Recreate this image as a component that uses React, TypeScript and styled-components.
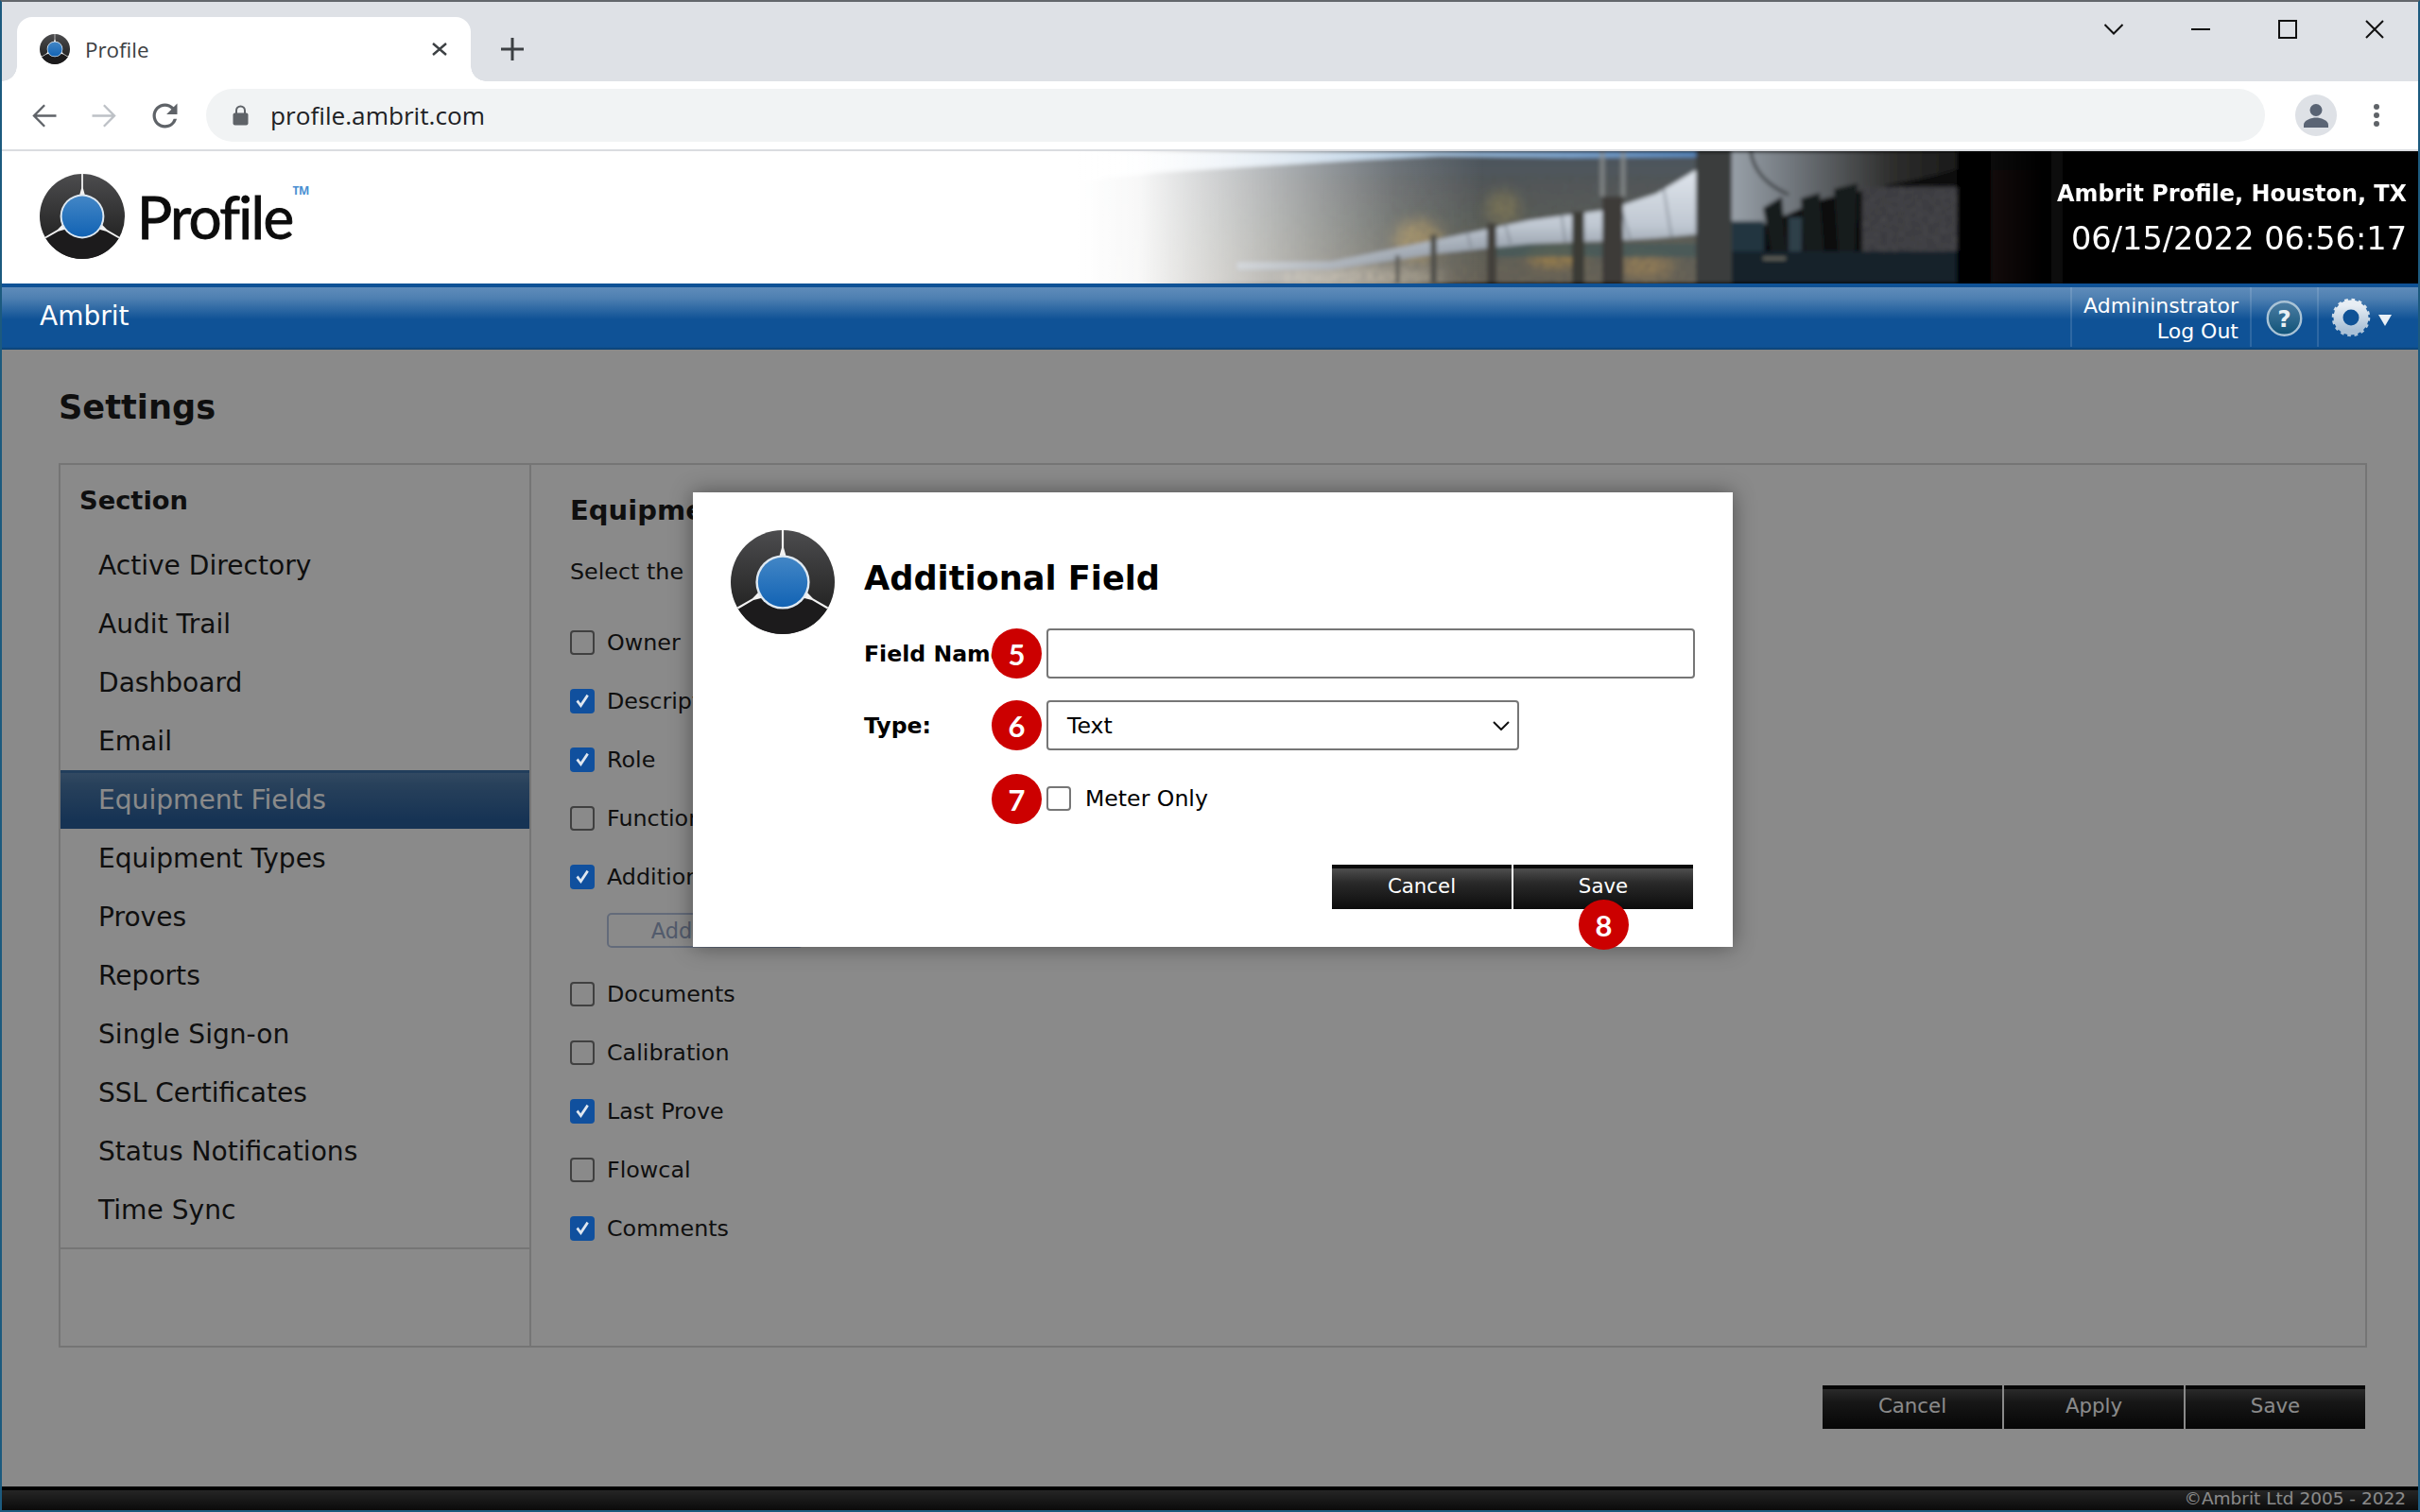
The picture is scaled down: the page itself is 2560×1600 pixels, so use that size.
import React from "react";
import styled, { createGlobalStyle } from "styled-components";

const sans = `"DejaVu Sans", Verdana, sans-serif`;
const ui = `"Open Sans", "Noto Sans", sans-serif`;

const Global = createGlobalStyle`
  html, body { margin: 0; padding: 0; background: #fff; }
  body { width: 2560px; height: 1600px; overflow: hidden; font-family: ${sans}; }
  * { box-sizing: border-box; }
`;

const Frame = styled.div`
  position: relative;
  width: 2560px;
  height: 1600px;
  display: flex;
  flex-direction: column;
  border: 2px solid #1c5a7e;
  border-top-color: #63676c;
`;

/* Browser chrome */
const TabStrip = styled.div`
  flex: 0 0 84px;
  display: flex;
  background: #dee1e6;
`;
const Tab = styled.div`
  position: relative;
  width: 480px;
  height: 68px;
  margin: 16px 0 0 16px;
  padding: 0 24px;
  display: flex;
  align-items: center;
  background: #fff;
  border-radius: 16px 16px 0 0;
  &::before, &::after {
    content: "";
    position: absolute;
    bottom: 0;
    width: 16px;
    height: 16px;
  }
  &::before { left: -16px; background: radial-gradient(circle at 0 0, transparent 15.5px, #fff 16px); }
  &::after { right: -16px; background: radial-gradient(circle at 100% 0, transparent 15.5px, #fff 16px); }
`;
const TabTitle = styled.span`
  flex: 1;
  margin-left: 16px;
  font: 400 22.4px ${ui};
  color: #3c4043;
`;
const NewTab = styled.div`
  width: 44px;
  height: 68px;
  margin: 16px 0 0 22px;
  display: flex;
  align-items: center;
  justify-content: center;
`;
const WindowControls = styled.div`
  margin-left: auto;
  display: flex;
  height: 58px;
`;
const WindowControl = styled.div`
  width: 92px;
  display: flex;
  align-items: center;
  justify-content: center;
`;
const Toolbar = styled.div`
  flex: 0 0 74px;
  display: flex;
  align-items: center;
  padding: 0 12px;
  background: #fff;
  border-bottom: 2px solid #dadce0;
`;
const ToolButton = styled.div`
  width: 64px;
  height: 56px;
  display: flex;
  align-items: center;
  justify-content: center;
`;
const Omnibox = styled.div`
  flex: 1;
  height: 56px;
  margin: 0 22px 0 12px;
  padding-left: 28px;
  display: flex;
  align-items: center;
  gap: 23px;
  background: #f1f3f4;
  border-radius: 28px;
`;
const Url = styled.span`
  font: 400 26.2px ${ui};
  color: #202124;
`;
const Avatar = styled.div`
  width: 44px;
  height: 44px;
  border-radius: 50%;
  background: #dee1e6;
  display: flex;
  align-items: center;
  justify-content: center;
`;

/* App header */
const Header = styled.header`
  position: relative;
  flex: 0 0 140px;
  display: flex;
  align-items: center;
  justify-content: space-between;
  background: #fff;
  padding: 0 12px 0 40px;
`;
const ArtLayer = styled.svg`
  position: absolute;
  top: 0;
  right: 0;
`;
const Brand = styled.div`
  position: relative;
  display: flex;
  align-items: center;
  gap: 13px;
  margin-top: -2px;
`;
const Wordmark = styled.span`
  font: 400 62px Lato, "Open Sans", sans-serif;
  letter-spacing: -1.7px;
  color: #0c0c0c;
  -webkit-text-stroke: 0.9px #0c0c0c;
`;
const Tm = styled.sup`
  font: 700 12px ${ui};
  color: #4a8fd2;
  align-self: flex-start;
  margin: 9px 0 0 -13px;
  letter-spacing: -0.5px;
`;
const Site = styled.div`
  position: relative;
  display: flex;
  flex-direction: column;
  align-items: flex-end;
  gap: 13px;
  color: #fff;
  padding-top: 2px;
`;
const SiteName = styled.div`
  font: 700 23.9px/30px ${sans};
`;
const Clock = styled.div`
  font: 400 33.6px/40px ${sans};
`;
const NavBar = styled.nav`
  flex: 0 0 70px;
  display: flex;
  align-items: stretch;
  color: #fff;
  background: linear-gradient(#0f5296 0 4px, #5f8cba 4px, #4d7fb1 16px, #0f5296 38px, #0f5296 67px, #0b3f6e 70px);
`;
const NavTitle = styled.div`
  flex: 1;
  padding: 0 0 2px 40px;
  display: flex;
  align-items: center;
  font: 400 28px ${sans};
`;
const NavCell = styled.div<{ $w: number }>`
  width: ${(p) => p.$w}px;
  margin: 4px 0 3px;
  display: flex;
  align-items: center;
  border-left: 2px solid rgba(255, 255, 255, 0.13);
`;
const UserBlock = styled(NavCell)`
  flex-direction: column;
  align-items: flex-end;
  justify-content: center;
  padding: 2px 12px 0 0;
  font: 400 22px/27px ${sans};
`;

/* Page */
const PageArea = styled.div`
  position: relative;
  flex: 1;
  min-height: 0;
  display: flex;
  flex-direction: column;
  background: #fff;
`;
const Scrim = styled.div`
  position: absolute;
  inset: 0;
  background: rgba(0, 0, 0, 0.46);
`;
const Main = styled.main`
  flex: 1;
  padding: 39px 54px 0 60px;
  color: #1c1c1c;
`;
const PageTitle = styled.h1`
  margin: 0 0 37px;
  font: 700 35.2px/44px ${sans};
`;
const Panel = styled.section`
  height: 936px;
  display: flex;
  border: 2px solid #d8d8d8;
`;
const Sidebar = styled.aside`
  flex: 0 0 498px;
  border-right: 2px solid #d8d8d8;
`;
const SectionHead = styled.h2`
  margin: 0;
  height: 75px;
  padding: 18px 0 0 20px;
  font: 700 27.3px/40px ${sans};
`;
const SectionList = styled.ul`
  list-style: none;
  margin: 0;
  padding: 0 0 9px;
  border-bottom: 2px solid #d8d8d8;
`;
const SectionItem = styled.li<{ $active?: boolean }>`
  height: 62px;
  padding-left: 40px;
  display: flex;
  align-items: center;
  font: 400 28.1px ${sans};
  color: ${(p) => (p.$active ? "#fff" : "inherit")};
  background: ${(p) =>
    p.$active ? "linear-gradient(#3f74aa 0 3px, #5d88b5 3px, #4a78a8 25%, #2a5f9c 85%)" : "none"};
`;
const Content = styled.div`
  flex: 1;
  padding: 28px 0 0 41px;
`;
const ContentHead = styled.h2`
  margin: 0;
  font: 700 29px/40px ${sans};
`;
const Hint = styled.p`
  margin: 27px 0 26px;
  font: 400 23.8px/36px ${sans};
`;
const CheckRow = styled.label`
  height: 62px;
  display: flex;
  align-items: center;
  gap: 13px;
  font: 400 23.8px ${sans};
`;
const AddRow = styled.div`
  height: 62px;
  padding: 7px 0 0 39px;
`;
const AddButton = styled.button`
  width: 208px;
  height: 37px;
  padding: 0;
  background: #fff;
  border: 2px solid #b8c6e2;
  border-radius: 5px;
  color: #98a8c8;
  font: 400 22.5px ${sans};
`;
const Box = styled.span<{ $checked?: boolean }>`
  position: relative;
  z-index: ${(p) => (p.$checked ? 1 : "auto")};
  flex: 0 0 26px;
  width: 26px;
  height: 26px;
  border-radius: 4px;
  display: flex;
  align-items: center;
  justify-content: center;
  background: ${(p) => (p.$checked ? "#10509e" : "#fff")};
  border: ${(p) => (p.$checked ? "none" : "2px solid #767676")};
`;
const Actions = styled.div`
  margin: 40px 2px 0 0;
  display: flex;
  justify-content: flex-end;
  gap: 2px;
`;
const BlackButton = styled.button`
  position: relative;
  width: 190px;
  height: 46px;
  padding: 0 0 3px;
  border: none;
  color: #fff;
  font: 400 21.3px ${sans};
  background: linear-gradient(#0a0a0a 0 4px, #4e4e4e 4px, #2a2a2a 40%, #0c0c0c 100%);
`;
const Footer = styled.footer`
  flex: 0 0 25px;
  padding-right: 13px;
  display: flex;
  align-items: center;
  justify-content: flex-end;
  color: #fff;
  font: 400 18.5px ${sans};
  background: linear-gradient(#000 0 4px, #464646 4px, #141414 100%);
`;

/* Dialog */
const Modal = styled.div`
  position: absolute;
  left: 731px;
  top: 519px;
  width: 1100px;
  height: 481px;
  padding: 40px 40px 0 40px;
  display: flex;
  gap: 31px;
  background: #fff;
  color: #000;
  box-shadow: 0 0 22px rgba(0, 0, 0, 0.42);
`;
const ModalBody = styled.div`
  flex: 1;
`;
const ModalTitle = styled.h2`
  margin: 0;
  height: 104px;
  padding-bottom: 3px;
  display: flex;
  align-items: center;
  font: 700 35.2px ${sans};
`;
const FieldRow = styled.div<{ $gap: number }>`
  position: relative;
  height: 53px;
  margin-bottom: ${(p) => p.$gap}px;
  display: flex;
  align-items: center;
`;
const FieldLabel = styled.label`
  flex: 0 0 193px;
  font: 700 23.6px ${sans};
`;
const TextBox = styled.input`
  flex: 1;
  height: 53px;
  border: 2px solid #767676;
  border-radius: 4px;
  background: #fff;
  outline: none;
`;
const Select = styled.div`
  width: 500px;
  height: 53px;
  padding: 0 8px 0 20px;
  display: flex;
  align-items: center;
  justify-content: space-between;
  border: 2px solid #767676;
  border-radius: 4px;
  font: 400 23.6px ${sans};
`;
const MeterCheck = styled.label`
  margin: -2px 0 0 193px;
  display: flex;
  align-items: center;
  gap: 15px;
  font: 400 23.6px ${sans};
`;
const ModalActions = styled.div`
  margin: 43px 2px 0 0;
  display: flex;
  justify-content: flex-end;
  gap: 2px;
`;
const ModalButton = styled(BlackButton)`
  height: 47px;
`;
const Callout = styled.span`
  position: absolute;
  width: 53px;
  height: 53px;
  border-radius: 50%;
  background: #cc0000;
  color: #fff;
  display: flex;
  align-items: center;
  justify-content: center;
  font: 700 31px Lato, sans-serif;
`;
const FieldCallout = styled(Callout)`
  left: 135px;
  top: 0;
`;
const SaveCallout = styled(Callout)`
  left: 69px;
  top: 37px;
`;

const Logo = ({ size, id }: { size: number; id: string }) => (
  <svg width={size} height={size} viewBox="-50 -50 100 100">
    <defs>
      <linearGradient id={`${id}d`} x1="0" y1="0" x2="0" y2="1">
        <stop offset="0" stopColor="#4c4c4e" />
        <stop offset="0.7" stopColor="#272727" />
      </linearGradient>
      <linearGradient id={`${id}b`} x1="0" y1="0" x2="0" y2="1">
        <stop offset="0" stopColor="#4286c6" />
        <stop offset="1" stopColor="#1263b4" />
      </linearGradient>
    </defs>
    <circle r="50" fill={`url(#${id}d)`} />
    <path d="M-43.3 25A50 50 0 0 0 43.3 25L0 0Z" fill="#1c1b1c" />
    {[0, 120, 240].map((a) => (
      <g key={a} transform={`rotate(${a})`}>
        <path d="M-1 -50H1V-33L3.500 -24H-3.500L-1 -33Z" fill="#f2f2f2" />
      </g>
    ))}
    <circle r="26" fill="#dfe9f2" />
    <circle r="23.800" fill={`url(#${id}b)`} />
  </svg>
);

const BannerArt = () => (
  <ArtLayer width="1418" height="140" viewBox="0 0 1418 140">
    <defs>
      <linearGradient id="fade" gradientUnits="userSpaceOnUse" x1="0" y1="0" x2="430" y2="0">
        <stop offset="0" stopColor="#fff" />
        <stop offset="0.15" stopColor="#fff" stopOpacity="0.96" />
        <stop offset="0.4" stopColor="#fff" stopOpacity="0.66" />
        <stop offset="0.78" stopColor="#fff" stopOpacity="0.18" />
        <stop offset="1" stopColor="#fff" stopOpacity="0" />
      </linearGradient>
      <linearGradient id="rfade" gradientUnits="userSpaceOnUse" x1="960" y1="0" x2="1022" y2="0">
        <stop offset="0" stopColor="#000" stopOpacity="0" />
        <stop offset="1" stopColor="#000" />
      </linearGradient>
      <linearGradient id="sky" x1="0" y1="0" x2="1" y2="0">
        <stop offset="0" stopColor="#eef3f7" />
        <stop offset="0.5" stopColor="#a6c2dc" />
        <stop offset="1" stopColor="#4d7fb8" />
      </linearGradient>
      <linearGradient id="hill" x1="0" y1="0" x2="0" y2="1">
        <stop offset="0" stopColor="#4c545c" />
        <stop offset="0.6" stopColor="#5e615a" />
        <stop offset="1" stopColor="#6c6658" />
      </linearGradient>
      <linearGradient id="thin" x1="0" y1="0" x2="0" y2="1">
        <stop offset="0" stopColor="#dfe5ec" />
        <stop offset="0.55" stopColor="#c0c8d2" />
        <stop offset="1" stopColor="#7a8490" />
      </linearGradient>
      <linearGradient id="big" gradientUnits="userSpaceOnUse" x1="692" y1="0" x2="1000" y2="0">
        <stop offset="0" stopColor="#98a0a8" />
        <stop offset="0.2" stopColor="#72787e" />
        <stop offset="0.55" stopColor="#2e2e2d" />
        <stop offset="1" stopColor="#050505" />
      </linearGradient>
      <filter id="soft" x="-5%" y="-5%" width="110%" height="110%">
        <feGaussianBlur stdDeviation="2" />
      </filter>
      <filter id="haze" x="-30%" y="-30%" width="160%" height="160%">
        <feGaussianBlur stdDeviation="7" />
      </filter>
      <filter id="grain" x="0" y="0" width="100%" height="100%">
        <feTurbulence type="fractalNoise" baseFrequency="0.16 0.3" numOctaves="2" seed="4" />
        <feColorMatrix values="0 0 0 0 0.08  0 0 0 0 0.08  0 0 0 0 0.08  1.6 0 0 0 -0.5" />
      </filter>
      <clipPath id="band"><rect width="1418" height="140" /></clipPath>
    </defs>
    <g clipPath="url(#band)">
      <rect width="1418" height="140" fill="#000" />
      <g filter="url(#soft)">
        <rect width="700" height="30" fill="url(#sky)" />
        <path d="M0 32L83 22L200 15L300 9L383 5L520 7L700 6V140H0Z" fill="url(#hill)" />
        <g filter="url(#haze)">
          <ellipse cx="360" cy="95" rx="26" ry="22" fill="#a58c56" opacity="0.85" />
          <ellipse cx="450" cy="60" rx="18" ry="18" fill="#8a8058" opacity="0.7" />
          <ellipse cx="505" cy="112" rx="30" ry="10" fill="#b08c4a" opacity="0.9" />
          <ellipse cx="600" cy="122" rx="30" ry="12" fill="#a88a58" opacity="0.8" />
          <ellipse cx="300" cy="134" rx="90" ry="10" fill="#a89e88" />
        </g>
        <rect x="20" y="25" width="640" height="115" filter="url(#grain)" opacity="0.6" />
        <rect x="440" y="98" width="214" height="14" fill="#43585a" opacity="0.7" />
        <path d="M169 118L268 117L383 93L478 73L561 62L612 45L654 20V88L612 92L561 95L478 98L383 108L268 125L169 125Z" fill="url(#thin)" />
        <path d="M412 85L416 102M452 76L458 98M512 68L516 97M574 56L584 92M620 40L628 90" stroke="#727a84" strokeWidth="2" opacity="0.7" />
        <path d="M555 0V48M577 0V48" stroke="#8d9090" strokeWidth="5" opacity="0.75" />
        <rect x="336" y="110" width="5" height="30" fill="#3e3c38" />
        <rect x="373" y="88" width="7" height="52" fill="#3e3c38" />
        <rect x="433" y="76" width="10" height="64" fill="#42403b" />
        <rect x="523" y="64" width="13" height="76" fill="#3b3a36" />
        <rect x="555" y="48" width="22" height="92" fill="#3c3b37" />
        <rect x="692" y="0" width="350" height="140" fill="#0b0e10" />
        <path d="M692 0H1000L905 26L790 50L692 92Z" fill="url(#big)" />
        <path d="M712 0Q716 30 752 46" stroke="#34373a" strokeWidth="3" fill="none" />
        <rect x="830" y="38" width="100" height="70" fill="#38383e" />
        <rect x="830" y="38" width="100" height="70" filter="url(#grain)" />
        <path d="M725 60L745 48L750 112H735ZM765 50L785 44L790 112H770ZM800 40L825 34L822 112H805Z" fill="#191a1c" />
        <rect x="692" y="74" width="34" height="32" fill="#243640" />
        <rect x="752" y="70" width="14" height="36" fill="#2d4048" />
        <rect x="692" y="106" width="300" height="34" fill="#13242a" />
        <rect x="725" y="112" width="24" height="3" fill="#6a6a60" />
        <rect x="654" y="0" width="38" height="140" fill="#3b3d3c" />
        <rect x="930" y="0" width="36" height="140" fill="#040506" />
        <rect x="966" y="20" width="56" height="120" fill="#120e0b" />
      </g>
      <rect width="430" height="140" fill="url(#fade)" />
      <rect x="960" width="70" height="140" fill="url(#rfade)" />
    </g>
  </ArtLayer>
);

const Check = () => (
  <svg width="20" height="20" viewBox="0 0 20 20">
    <path d="M3.5 10.5L5.6 8.6L8.2 12.2L14.6 2.8L16.8 4.4L8.5 17Z" fill="#dfe7f0" />
  </svg>
);

const sections = [
  "Active Directory", "Audit Trail", "Dashboard", "Email", "Equipment Fields", "Equipment Types",
  "Proves", "Reports", "Single Sign-on", "SSL Certificates", "Status Notifications", "Time Sync",
];
const firstFields: [string, boolean][] = [
  ["Owner", false], ["Description", true], ["Role", true], ["Function", false], ["Additional Fields", true],
];
const lastFields: [string, boolean][] = [
  ["Documents", false], ["Calibration", false], ["Last Prove", true], ["Flowcal", false], ["Comments", true],
];

const Field = ({ name, on }: { name: string; on: boolean }) => (
  <CheckRow>
    <Box $checked={on}>{on && <Check />}</Box>
    {name}
  </CheckRow>
);

export default function App() {
  return (
    <Frame>
      <Global />
      <TabStrip>
        <Tab>
          <Logo size={32} id="fav" />
          <TabTitle>Profile</TabTitle>
          <svg width="18" height="18" viewBox="0 0 18 18">
            <path d="M2 3L16 15M16 3L2 15" stroke="#3c4043" strokeWidth="2.4" />
          </svg>
        </Tab>
        <NewTab>
          <svg width="24" height="24" viewBox="0 0 24 24">
            <path d="M12 0V24M0 12H24" stroke="#3c4043" strokeWidth="3" />
          </svg>
        </NewTab>
        <WindowControls>
          <WindowControl>
            <svg width="22" height="12" viewBox="0 0 22 12">
              <path d="M1.5 1L11 10.5L20.5 1" stroke="#111" strokeWidth="2" fill="none" />
            </svg>
          </WindowControl>
          <WindowControl>
            <svg width="20" height="20" viewBox="0 0 20 20"><path d="M0 10H20" stroke="#111" strokeWidth="2" /></svg>
          </WindowControl>
          <WindowControl>
            <svg width="20" height="20" viewBox="0 0 20 20"><rect x="1" y="1" width="18" height="18" stroke="#111" strokeWidth="2" fill="none" /></svg>
          </WindowControl>
          <WindowControl>
            <svg width="20" height="20" viewBox="0 0 20 20"><path d="M1 1L19 19M19 1L1 19" stroke="#111" strokeWidth="2" /></svg>
          </WindowControl>
        </WindowControls>
      </TabStrip>
      <Toolbar>
        <ToolButton>
          <svg width="39" height="39" viewBox="0 0 24 24" fill="#5f6368"><path d="M20 11.2H7.3l5.6-5.6L11.9 4.600l-7.400 7.400 7.400 7.400 1-1-5.600-5.600H20z" /></svg>
        </ToolButton>
        <ToolButton>
          <svg width="39" height="39" viewBox="0 0 24 24" fill="#bdc1c6"><path d="M4 11.2h12.700l-5.600-5.600 1-1 7.400 7.400-7.400 7.400-1-1 5.600-5.600H4z" /></svg>
        </ToolButton>
        <ToolButton>
          <svg width="39" height="39" viewBox="0 0 24 24" fill="#5f6368"><path d="M17.65 6.35A7.958 7.958 0 0 0 12 4c-4.420 0-7.990 3.580-7.990 8s3.570 8 7.990 8c3.730 0 6.840-2.550 7.730-6h-2.080A5.990 5.990 0 0 1 12 18c-3.310 0-6-2.690-6-6s2.690-6 6-6c1.660 0 3.140.69 4.220 1.780L13 11h7V4l-2.350 2.350z" /></svg>
        </ToolButton>
        <Omnibox>
          <svg width="17" height="22" viewBox="0 0 17 22">
            <path d="M4 9V6a4.500 4.500 0 0 1 9 0v3" stroke="#5f6368" strokeWidth="2" fill="none" />
            <rect x="0.5" y="8.500" width="16" height="13" rx="2" fill="#5f6368" />
          </svg>
          <Url>profile.ambrit.com</Url>
        </Omnibox>
        <ToolButton>
          <Avatar>
            <svg width="28" height="26" viewBox="0 0 28 26" fill="#5a6474">
              <circle cx="14" cy="7.500" r="6.500" />
              <path d="M1 26v-3c0-5 8.500-7.500 13-7.500S27 18 27 23v3z" />
            </svg>
          </Avatar>
        </ToolButton>
        <ToolButton>
          <svg width="8" height="26" viewBox="0 0 8 26" fill="#5f6368">
            <circle cx="4" cy="4" r="3" /><circle cx="4" cy="13" r="3" /><circle cx="4" cy="22" r="3" />
          </svg>
        </ToolButton>
      </Toolbar>

      <Header>
        <BannerArt />
        <Brand>
          <Logo size={90} id="hdr" />
          <Wordmark>Profile</Wordmark>
          <Tm>TM</Tm>
        </Brand>
        <Site>
          <SiteName>Ambrit Profile, Houston, TX</SiteName>
          <Clock>06/15/2022 06:56:17</Clock>
        </Site>
      </Header>
      <NavBar>
        <NavTitle>Ambrit</NavTitle>
        <UserBlock $w={190}>
          <span>Admininstrator</span>
          <span>Log Out</span>
        </UserBlock>
        <NavCell $w={71}>
          <svg width="72" height="44" viewBox="0 0 72 44">
            <defs>
              <linearGradient id="help" x1="0" y1="0" x2="0" y2="1">
                <stop offset="0" stopColor="#4d7ea4" />
                <stop offset="1" stopColor="#0f5277" />
              </linearGradient>
            </defs>
            <circle cx="36" cy="23" r="18.500" fill="url(#help)" stroke="#a9c3d6" strokeWidth="2.500" />
            <text x="36" y="32" textAnchor="middle" fill="#e8f0f4" fontFamily="'DejaVu Sans', sans-serif" fontWeight="700" fontSize="26">?</text>
          </svg>
        </NavCell>
        <NavCell $w={107}>
          <svg width="100" height="44" viewBox="0 0 100 44">
            <defs>
              <linearGradient id="gear" x1="0" y1="0" x2="0" y2="1">
                <stop offset="0" stopColor="#e8eef4" />
                <stop offset="1" stopColor="#a9c0d6" />
              </linearGradient>
            </defs>
            <circle cx="34" cy="22" r="18.500" fill="none" stroke="url(#gear)" strokeWidth="3.500" strokeDasharray="3.600 3.660" />
            <circle cx="34" cy="22" r="13" fill="none" stroke="url(#gear)" strokeWidth="11" />
            <circle cx="34" cy="22" r="8.500" fill="#0f5296" />
            <path d="M63 19H77L70 31Z" fill="#e9f0f6" />
          </svg>
        </NavCell>
      </NavBar>

      <PageArea>
        <Main>
          <PageTitle>Settings</PageTitle>
          <Panel>
            <Sidebar>
              <SectionHead>Section</SectionHead>
              <SectionList>
                {sections.map((s) => (
                  <SectionItem key={s} $active={s === "Equipment Fields"}>{s}</SectionItem>
                ))}
              </SectionList>
            </Sidebar>
            <Content>
              <ContentHead>Equipment Fields</ContentHead>
              <Hint>Select the{"\u00a0\u00a0"}fields to display</Hint>
              {firstFields.map(([n, on]) => <Field key={n} name={n} on={on} />)}
              <AddRow><AddButton>Add Fields</AddButton></AddRow>
              {lastFields.map(([n, on]) => <Field key={n} name={n} on={on} />)}
            </Content>
          </Panel>
          <Actions>
            <BlackButton>Cancel</BlackButton>
            <BlackButton>Apply</BlackButton>
            <BlackButton>Save</BlackButton>
          </Actions>
        </Main>
        <Footer>©Ambrit Ltd 2005 - 2022</Footer>
        <Scrim />
      </PageArea>

      <Modal>
        <Logo size={110} id="dlg" />
        <ModalBody>
          <ModalTitle>Additional Field</ModalTitle>
          <FieldRow $gap={23}>
            <FieldLabel>Field Name:</FieldLabel>
            <TextBox />
            <FieldCallout>5</FieldCallout>
          </FieldRow>
          <FieldRow $gap={25}>
            <FieldLabel>Type:</FieldLabel>
            <Select>
              Text
              <svg width="18" height="10" viewBox="0 0 18 10">
                <path d="M1 1L9 9L17 1" stroke="#111" strokeWidth="2" fill="none" />
              </svg>
            </Select>
            <FieldCallout>6</FieldCallout>
          </FieldRow>
          <FieldRow $gap={0}>
            <MeterCheck>
              <Box />
              Meter Only
            </MeterCheck>
            <FieldCallout>7</FieldCallout>
          </FieldRow>
          <ModalActions>
            <ModalButton>Cancel</ModalButton>
            <ModalButton>
              Save
              <SaveCallout>8</SaveCallout>
            </ModalButton>
          </ModalActions>
        </ModalBody>
      </Modal>
    </Frame>
  );
}
